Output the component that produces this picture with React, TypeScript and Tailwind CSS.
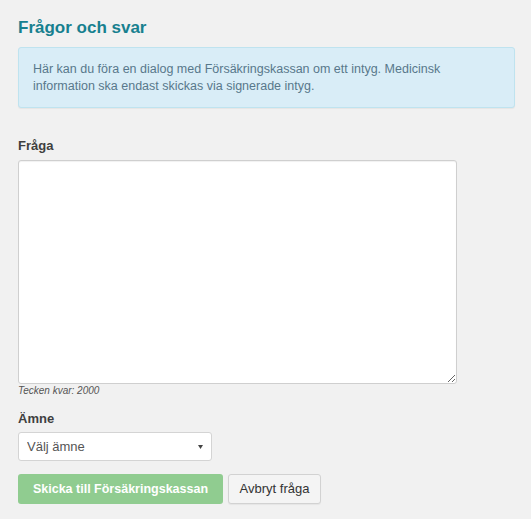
import React, { useState } from 'react';

const FONT = "font-['Liberation_Sans',Arial,sans-serif]";

export default function App() {
  const [text, setText] = useState('');
  const [topic, setTopic] = useState('');
  const max = 2000;

  return (
    <div className={`min-h-[519px] w-full bg-[#f1f1f1] px-[18px] pt-[17px] pb-4 ${FONT}`}>
      <h2 className="text-[17px] leading-[22px] font-bold text-[#17808f]">Frågor och svar</h2>

      {/* Info */}
      <div className="mt-[8px] w-[497px] rounded-[3px] border border-[#bfe3ef] bg-[#d9edf7] pl-[14px] pr-4 pt-[13px] pb-[12px] text-[12.5px] leading-[17px] text-[#58788b] shadow-[0_1px_1px_rgba(0,0,0,0.05)]">
        Här kan du föra en dialog med Försäkringskassan om ett intyg. Medicinsk information ska endast skickas via signerade intyg.
      </div>

      {/* Fråga */}
      <label className="mt-[29px] block text-[13px] leading-[17px] font-bold text-[#3f3f3f]">Fråga</label>
      <textarea
        value={text}
        onChange={(e) => setText(e.target.value)}
        maxLength={max}
        className="mt-[6px] block h-[224px] w-[439px] rounded-[3px] border border-[#cfcfcf] bg-white px-2 py-1 text-[13px] text-[#333] outline-none shadow-[inset_0_1px_1px_rgba(0,0,0,0.06)]"
      />
      <p className="text-[10px] leading-[14px] italic text-[#555]">Tecken kvar: {max - text.length}</p>

      {/* Ämne */}
      <label className="mt-[12px] block text-[13px] leading-[17px] font-bold text-[#3f3f3f]">Ämne</label>
      <div className="relative mt-[5px] w-[194px]">
        <select
          value={topic}
          onChange={(e) => setTopic(e.target.value)}
          className="block h-[29px] w-full appearance-none rounded-[3px] border border-[#d4d4d4] bg-white pl-[8px] pr-6 text-[13px] text-[#555] outline-none"
        >
          <option value="">Välj ämne</option>
          <option value="komplettering">Komplettering</option>
          <option value="kontakt">Kontakt</option>
          <option value="ovrigt">Övrigt</option>
        </select>
        <svg className="pointer-events-none absolute right-[9px] top-[13px]" width="5" height="4" viewBox="0 0 5 4">
          <path d="M0 0h5L2.5 4z" fill="#444" />
        </svg>
      </div>

      {/* Actions */}
      <div className="mt-[13px] flex gap-[5px]">
        <button
          disabled
          className="h-[30px] w-[205px] rounded-[3px] bg-[#90cc90] text-[12.5px] font-bold text-white"
        >
          Skicka till Försäkringskassan
        </button>
        <button className="h-[30px] w-[93px] rounded-[3px] border border-[#d2d2d2] bg-[#f4f4f4] text-[13px] text-[#333] shadow-[0_1px_1px_rgba(0,0,0,0.05)]">
          Avbryt fråga
        </button>
      </div>
    </div>
  );
}
